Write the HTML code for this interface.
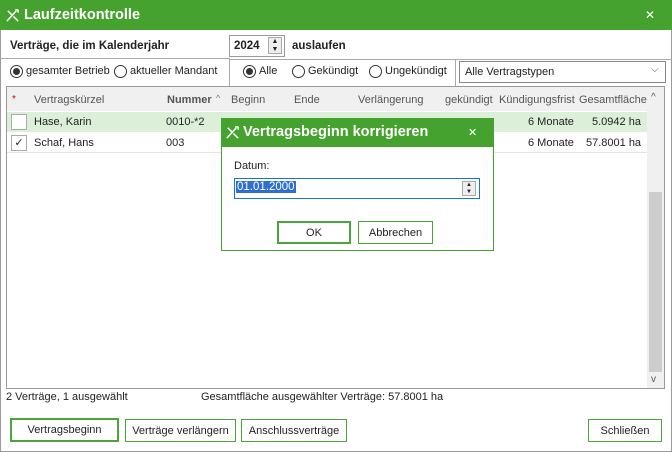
<!DOCTYPE html>
<html><head><meta charset="utf-8"><style>
*{box-sizing:border-box;margin:0;padding:0}
body{width:672px;height:452px;overflow:hidden;background:#fff;font-family:"Liberation Sans",sans-serif;font-size:11px;color:#222;position:relative}
.a{position:absolute;white-space:nowrap}
.t{margin-top:2px}
.radio{position:absolute;width:13px;height:13px;border:1px solid #333;border-radius:50%;background:#fff}
.radio.on::after{content:"";position:absolute;left:2px;top:2px;width:7px;height:7px;border-radius:50%;background:#333}
.btn{position:absolute;border:1px solid #4aa53a;background:#fff;text-align:center;font-size:11px;line-height:22px}
</style></head><body>
<div class="a" style="left:0;top:0;width:672px;height:452px;border:1px solid #9a9a9a;border-top:none"></div>
<div class="a" style="left:0;top:0;width:672px;height:30px;background:#45a22e"></div>
<svg class="a" style="left:5px;top:8px" width="15" height="15" viewBox="0 0 16 16"><path d="M2 14 L12 3 M3 3 L7 7 M9 9 L14 14 M11 2 L14 2 M14 2 L14 5" stroke="#fff" stroke-width="1.6" fill="none"/></svg>
<div class="a" style="left:24px;top:7px;color:#fff;font-weight:bold;font-size:14.5px">Laufzeitkontrolle</div>
<div class="a" style="left:645px;top:8px;color:#fff;font-size:12px">✕</div>

<div class="a" style="left:10px;top:40px;font-weight:bold;font-size:11.5px">Verträge, die im Kalenderjahr</div>
<div class="a" style="left:229px;top:35px;width:56px;height:22px;border:1px solid #999"></div>
<div class="a" style="left:234px;top:40px;font-weight:bold;font-size:11.5px">2024</div>
<div class="a" style="left:268px;top:37px;width:14px;height:17px;border:1px solid #aaa;background:#eee;font-size:7px;line-height:8px;text-align:center">▲<br>▼</div>
<div class="a" style="left:292px;top:40px;font-weight:bold;font-size:11.5px">auslaufen</div>
<div class="a" style="left:0;top:58px;width:230px;height:1px;background:#aaa"></div>
<div class="a" style="left:229px;top:58px;width:1px;height:28px;background:#aaa"></div>
<div class="a" style="left:230px;top:59px;width:442px;height:1px;background:#aaa"></div>
<div class="a" style="left:455px;top:59px;width:1px;height:27px;background:#aaa"></div>

<div class="radio on" style="left:10px;top:65px"></div><div class="a" style="left:26px;top:65px">gesamter Betrieb</div>
<div class="radio" style="left:114px;top:65px"></div><div class="a" style="left:130px;top:65px">aktueller Mandant</div>
<div class="radio on" style="left:243px;top:65px"></div><div class="a" style="left:259px;top:65px">Alle</div>
<div class="radio" style="left:292px;top:65px"></div><div class="a" style="left:308px;top:65px">Gekündigt</div>
<div class="radio" style="left:369px;top:65px"></div><div class="a" style="left:385px;top:65px">Ungekündigt</div>
<div class="a" style="left:459px;top:61px;width:207px;height:22px;border:1px solid #888"></div>
<div class="a" style="left:465px;top:66px">Alle Vertragstypen</div>
<div class="a" style="left:651px;top:64px;font-size:10px;color:#555">⌵</div>

<div class="a" style="left:6px;top:86px;width:659px;height:303px;border:1px solid #999"></div>
<div class="a" style="left:7px;top:87px;width:640px;height:24px;background:#f0f0f0"></div>
<div class="a" style="left:12px;top:94px;color:#c00;font-size:10px">*</div>
<div class="a" style="left:34px;top:94px;color:#555">Vertragskürzel</div>
<div class="a" style="left:167px;top:94px;color:#555;font-weight:bold">Nummer</div>
<div class="a" style="left:216px;top:93px;color:#777;font-size:9px">^</div>
<div class="a" style="left:231px;top:94px;color:#555">Beginn</div>
<div class="a" style="left:294px;top:94px;color:#555">Ende</div>
<div class="a" style="left:358px;top:94px;color:#555">Verlängerung</div>
<div class="a" style="left:445px;top:94px;color:#555">gekündigt</div>
<div class="a" style="left:499px;top:94px;color:#555">Kündigungsfrist</div>
<div class="a" style="left:579px;top:94px;color:#555">Gesamtfläche</div>
<div class="a" style="left:7px;top:112px;width:640px;height:20px;background:#dcefd9"></div>
<div class="a" style="left:7px;top:152px;width:640px;height:1px;background:#e4e4e4"></div>
<div class="a" style="left:11px;top:114px;width:16px;height:16px;border:1px solid #aaa;background:#fff"></div>
<div class="a" style="left:11px;top:135px;width:16px;height:16px;border:1px solid #aaa;background:#fff;text-align:center;line-height:14px;font-size:11px">✓</div>
<div class="a" style="left:34px;top:116px">Hase, Karin</div><div class="a" style="left:166px;top:116px">0010-*2</div>
<div class="a" style="left:34px;top:137px">Schaf, Hans</div><div class="a" style="left:166px;top:137px">003</div>
<div class="a" style="left:528px;top:116px">6 Monate</div><div class="a" style="left:592px;top:116px">5.0942 ha</div>
<div class="a" style="left:528px;top:137px">6 Monate</div><div class="a" style="left:586px;top:137px">57.8001 ha</div>

<div class="a" style="left:647px;top:87px;width:17px;height:301px;background:#f0f0f0"></div>
<div class="a" style="left:649px;top:192px;width:13px;height:180px;background:#cdcdcd"></div>
<div class="a" style="left:651px;top:92px;font-size:10px;color:#555">^</div>
<div class="a" style="left:651px;top:374px;font-size:10px;color:#555">v</div>

<div class="a" style="left:6px;top:391px">2 Verträge, 1 ausgewählt</div>
<div class="a" style="left:201px;top:391px">Gesamtfläche ausgewählter Verträge: 57.8001 ha</div>
<div class="btn" style="left:10px;top:418px;width:109px;height:24px;border-width:2px;line-height:21px">Vertragsbeginn</div>
<div class="btn" style="left:125px;top:419px;width:111px;height:23px">Verträge verlängern</div>
<div class="btn" style="left:241px;top:419px;width:106px;height:23px">Anschlussverträge</div>
<div class="btn" style="left:588px;top:419px;width:74px;height:23px">Schließen</div>

<div class="a" style="left:221px;top:118px;width:273px;height:133px;background:#fff;border:1px solid #45a22e"></div>
<div class="a" style="left:221px;top:118px;width:273px;height:29px;background:#45a22e"></div>
<svg class="a" style="left:225px;top:125px" width="15" height="15" viewBox="0 0 16 16"><path d="M2 14 L12 3 M3 3 L7 7 M9 9 L14 14 M11 2 L14 2 M14 2 L14 5" stroke="#fff" stroke-width="1.6" fill="none"/></svg>
<div class="a" style="left:243px;top:124px;color:#fff;font-weight:bold;font-size:14.5px">Vertragsbeginn korrigieren</div>
<div class="a" style="left:468px;top:126px;color:#fff;font-size:11px">✕</div>
<div class="a" style="left:234px;top:160px">Datum:</div>
<div class="a" style="left:234px;top:178px;width:246px;height:21px;border:1px solid #1a73d8"></div>
<div class="a" style="left:236px;top:181px;background:#2f6fd0;color:#fff;padding:0 1px;font-size:11.5px">01.01.2000</div>
<div class="a" style="left:462px;top:181px;width:14px;height:15px;border:1px solid #aaa;background:#eee;font-size:6px;line-height:7px;text-align:center">▲<br>▼</div>
<div class="btn" style="left:277px;top:221px;width:74px;height:23px;border-width:2px;line-height:20px">OK</div>
<div class="btn" style="left:358px;top:221px;width:75px;height:23px">Abbrechen</div>
</body></html>
